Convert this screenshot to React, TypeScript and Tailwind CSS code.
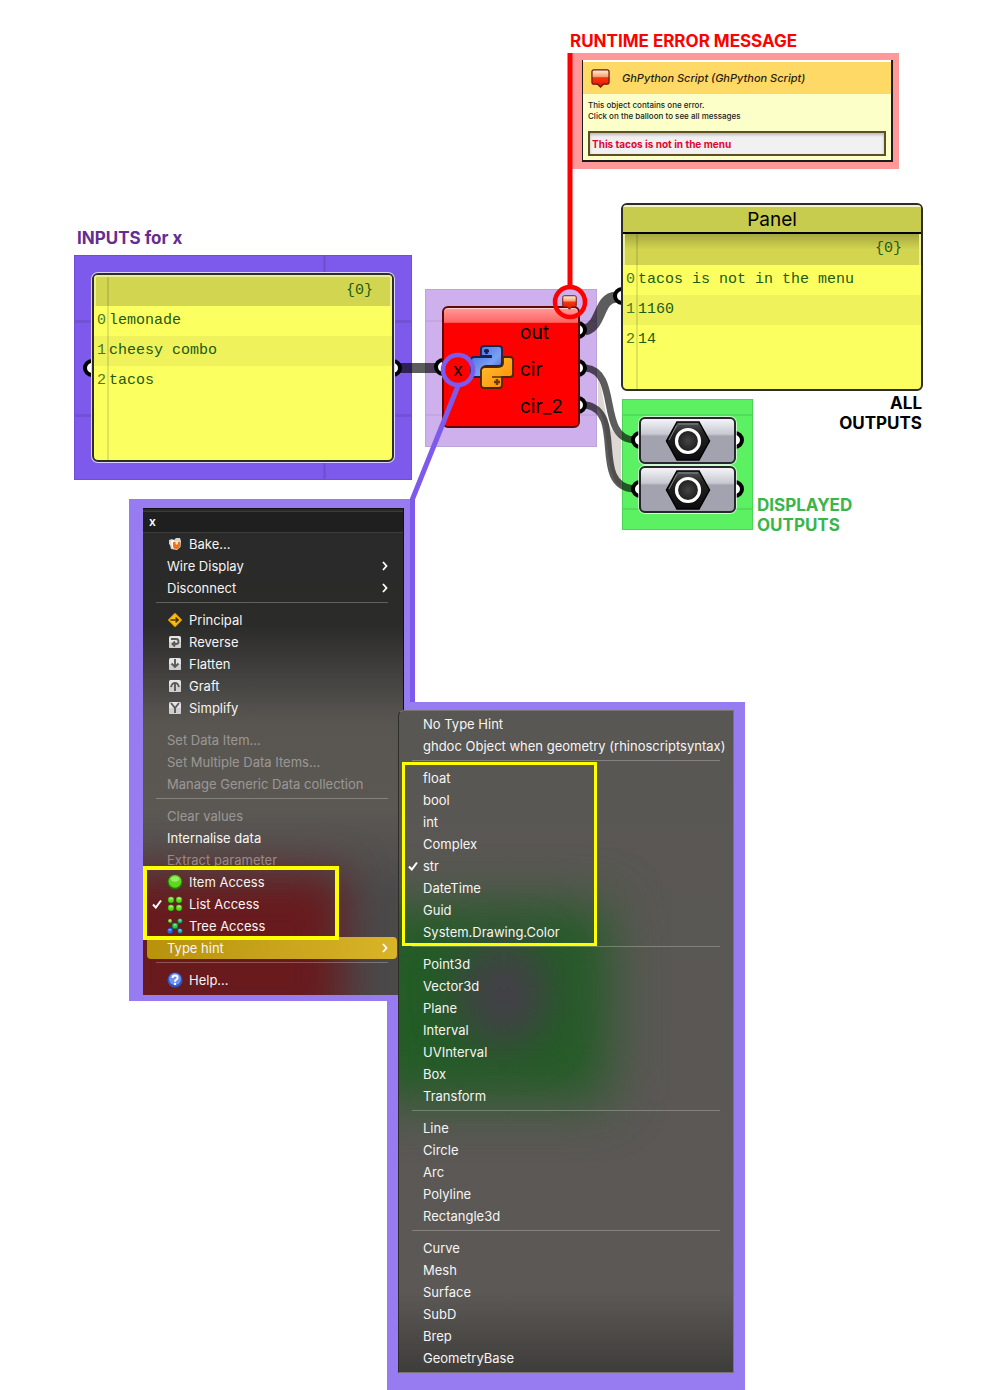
import React from "react";

type Item = {
  label: string;
  icon?: React.ReactNode;
  disabled?: boolean;
  checked?: boolean;
  submenu?: boolean;
  active?: boolean;
};

function BakeIcon() {
  return (
    <svg viewBox="0 0 14 14" className="size-[14px]" aria-hidden="true">
      <path d="M1 3 L4 2 L6 3 L8 1 L12 1 L13 4 L12.500 10 L9 13 L3 12 L2 8 L1 7Z" fill="#ddd6cf" />
      <path d="M3 4 L6 3 L6 11 L4 10Z" fill="#fff" />
      <path d="M5 5 H12 V9 Q11 12 8.500 12 Q5 12 5 9Z" fill="#f0701c" />
      <path d="M7.500 4 H10 V7 Q8.800 8.500 7.500 7Z" fill="#ffe9a8" />
    </svg>
  );
}

function PrincipalIcon() {
  return (
    <svg viewBox="0 0 14 14" className="size-[14px]" aria-hidden="true">
      <path d="M7 .8 L13.200 7 L7 13.200 L.8 7Z" fill="#fcc30d" stroke="#f0ac08" strokeWidth="1.500" strokeLinejoin="round" />
      <path d="M2.500 7 H10 M7.500 4.500 L10.200 7 L7.500 9.500" fill="none" stroke="#4b3508" strokeWidth="1.600" />
    </svg>
  );
}

function TileIcon({ children }: { children: React.ReactNode }) {
  return (
    <svg viewBox="0 0 14 14" className="size-[14px]" aria-hidden="true">
      <rect x="1" y="1" width="12" height="12" rx="1.500" fill="#e4e4e4" />
      <path d="M1 7 H13 V11.500 Q13 13 11.500 13 H2.500 Q1 13 1 11.500Z" fill="#cfcfcf" />
      <g fill="none" stroke="#5a5a5a" strokeWidth="1.900">{children}</g>
    </svg>
  );
}

function SphereIcon({ spots }: { spots: { x: number; y: number; r: number; c: string; d: string }[] }) {
  return (
    <svg viewBox="0 0 16 16" className="size-[16px]" aria-hidden="true">
      {spots.length === 5 && <path d="M3 3 L13 13 M13 3 L3 13" stroke="#2a4a8a" strokeWidth="1.500" />}
      {spots.map((s, i) => (
        <g key={i}>
          <circle cx={s.x} cy={s.y} r={s.r} fill={s.d} />
          <circle cx={s.x} cy={s.y - s.r * 0.1} r={s.r * 0.85} fill={s.c} />
          <ellipse cx={s.x} cy={s.y - s.r * 0.4} rx={s.r * 0.55} ry={s.r * 0.35} fill="#fff" opacity=".4" />
        </g>
      ))}
    </svg>
  );
}

function HelpIcon() {
  return (
    <svg viewBox="0 0 16 16" className="size-[16px]" aria-hidden="true">
      <circle cx="8" cy="8" r="7.500" fill="#2e55c8" />
      <circle cx="8" cy="7" r="6" fill="#6d93ee" />
      <path d="M5.500 6 Q5.500 3.500 8 3.500 Q10.600 3.500 10.600 5.700 Q10.600 7 9 7.800 Q8 8.400 8 9.700" fill="none" stroke="#fff" strokeWidth="1.900" />
      <circle cx="8" cy="12" r="1.200" fill="#fff" />
    </svg>
  );
}

function Balloon({ className }: { className: string }) {
  return (
    <svg viewBox="0 0 20 20" className={className} aria-hidden="true">
      <defs>
        <linearGradient id="balloon" x1="0" y1="0" x2="0" y2="1">
          <stop offset="0" stopColor="#fff3e0" />
          <stop offset=".4" stopColor="#f7a070" />
          <stop offset=".45" stopColor="#f03a12" />
          <stop offset="1" stopColor="#ee1000" />
        </linearGradient>
      </defs>
      <path d="M3 1 H17 Q19 1 19 3 V14 Q19 16 17 16 H13 L10 19 L7 16 H3 Q1 16 1 14 V3 Q1 1 3 1Z" fill="url(#balloon)" stroke="#6e1408" strokeWidth="1.300" />
    </svg>
  );
}

function PythonIcon() {
  return (
    <svg viewBox="0 0 44 44" className="size-[44px]" aria-hidden="true">
      <defs>
        <linearGradient id="pyBlue" x1="0" y1="0" x2="1" y2="1">
          <stop offset="0" stopColor="#3d66d8" />
          <stop offset=".6" stopColor="#7ba0f5" />
          <stop offset="1" stopColor="#3555b8" />
        </linearGradient>
        <linearGradient id="pyGold" x1="0" y1="0" x2="1" y2="1">
          <stop offset="0" stopColor="#ffc43a" />
          <stop offset="1" stopColor="#ff8a00" />
        </linearGradient>
      </defs>
      <path d="M14 1 H29 Q32 1 32 4 V18 Q32 21 29 21 H17 Q12 21 12 26 V32 H4 Q1 32 1 29 V15 Q1 12 4 12 H21 V11 H11 V4 Q11 1 14 1Z" fill="url(#pyBlue)" stroke="#14234f" strokeWidth="1.800" />
      <path d="M33 12 H40 Q43 12 43 15 V29 Q43 32 40 32 H32 V40 Q32 43 29 43 H14 Q11 43 11 40 V26 Q11 22 15 22 H28 Q33 22 33 18Z" fill="url(#pyGold)" stroke="#4c2500" strokeWidth="1.800" />
      <path d="M22 32 H32" stroke="#5c2d00" strokeWidth="1.500" />
      <path d="M14 6 h5 M16.500 4 v5" stroke="#13204d" strokeWidth="2.600" />
      <path d="M24 37 h6 M27 34 v6" stroke="#6b3a00" strokeWidth="2.400" />
    </svg>
  );
}

function HexIcon() {
  return (
    <svg viewBox="0 0 46 42" className="h-[42px] w-[46px]" aria-hidden="true">
      <defs>
        <linearGradient id="hex" x1="0" y1="0" x2="0" y2="1">
          <stop offset="0" stopColor="#555" />
          <stop offset=".3" stopColor="#222" />
          <stop offset="1" stopColor="#0c0c0c" />
        </linearGradient>
        <radialGradient id="hexHole">
          <stop offset="0" stopColor="#444" />
          <stop offset="1" stopColor="#1c1c1c" />
        </radialGradient>
      </defs>
      <path d="M12 2 H34 L44.500 21 L34 40 H12 L1.500 21Z" fill="url(#hex)" stroke="#000" strokeWidth="1.500" />
      <path d="M13 4 H33 M12 5 L4 20" stroke="#888" fill="none" />
      <circle cx="23" cy="21" r="11.500" fill="url(#hexHole)" stroke="#fff" strokeWidth="3.200" />
    </svg>
  );
}

const green = { c: "#5fd81a", d: "#1f7a08" };
const contextGroups: Item[][] = [
  [{ label: "Bake...", icon: <BakeIcon /> }, { label: "Wire Display", submenu: true }, { label: "Disconnect", submenu: true }],
  [
    { label: "Principal", icon: <PrincipalIcon /> },
    { label: "Reverse", icon: <TileIcon><path d="M3 4 H8 Q10.500 4 10.500 6.500 Q10.500 9 8 9 H4.500 M7 6.500 L4.500 9 L7 11.500" /></TileIcon> },
    { label: "Flatten", icon: <TileIcon><path d="M7 2 V10 M3.500 6.500 L7 10 L10.500 6.500" /></TileIcon> },
    { label: "Graft", icon: <TileIcon><path d="M7 12 V4 M3 8 Q4 4 7 4 Q10 4 11 8" /></TileIcon> },
    { label: "Simplify", icon: <TileIcon><path d="M3 2 L7 7 L11 2 M7 7 V12" /></TileIcon> },
  ],
  [
    { label: "Set Data Item...", disabled: true },
    { label: "Set Multiple Data Items...", disabled: true },
    { label: "Manage Generic Data collection", disabled: true },
  ],
  [
    { label: "Clear values", disabled: true },
    { label: "Internalise data" },
    { label: "Extract parameter", disabled: true },
    { label: "Item Access", icon: <SphereIcon spots={[{ x: 8, y: 8, r: 7.5, ...green }]} /> },
    {
      label: "List Access",
      checked: true,
      icon: <SphereIcon spots={[{ x: 4, y: 4, r: 3.3, ...green }, { x: 12, y: 4, r: 3.3, ...green }, { x: 4, y: 12, r: 3.3, ...green }, { x: 12, y: 12, r: 3.3, ...green }]} />,
    },
    {
      label: "Tree Access",
      icon: (
        <SphereIcon
          spots={[
            { x: 3, y: 3, r: 2, c: "#8ade20", d: "#3c8a10" },
            { x: 13, y: 3, r: 2.5, c: "#20c070", d: "#0b7a50" },
            { x: 3, y: 13, r: 3, c: "#2866d8", d: "#123a98" },
            { x: 13, y: 13, r: 2.5, c: "#18b0c0", d: "#0b6a88" },
            { x: 8, y: 8, r: 3, c: "#20d040", d: "#0b8030" },
          ]}
        />
      ),
    },
    { label: "Type hint", submenu: true, active: true },
  ],
  [{ label: "Help...", icon: <HelpIcon /> }],
];

const hints = (...labels: string[]): Item[] => labels.map((label) => ({ label, checked: label === "str" }));
const hintGroups: Item[][] = [
  hints("No Type Hint", "ghdoc Object when geometry (rhinoscriptsyntax)"),
  hints("float", "bool", "int", "Complex", "str", "DateTime", "Guid", "System.Drawing.Color"),
  hints("Point3d", "Vector3d", "Plane", "Interval", "UVInterval", "Box", "Transform"),
  hints("Line", "Circle", "Arc", "Polyline", "Rectangle3d"),
  hints("Curve", "Mesh", "Surface", "SubD", "Brep", "GeometryBase"),
];

function MenuRow({ item }: { item: Item }) {
  return (
    <button
      type="button"
      disabled={item.disabled}
      className={`mx-1 flex h-[22px] items-center whitespace-nowrap rounded pr-2 text-left text-[13px] leading-[22px] ${
        item.disabled ? "text-white/40" : "text-[#f6f5f4]"
      } ${item.active ? "bg-linear-to-r from-[#b8920b] to-[#d8b428]" : ""}`}
    >
      <span className="flex w-5 shrink-0 justify-center">
        {item.checked && (
          <svg viewBox="0 0 10 10" className="size-[10px]" aria-label="checked">
            <path d="M1 5.500 L3.800 8.500 L9 1.500" fill="none" stroke="#fff" strokeWidth="2" />
          </svg>
        )}
      </span>
      {item.icon && <span className="mr-1.5 flex w-4 shrink-0 justify-center">{item.icon}</span>}
      <span className="grow">{item.label}</span>
      {item.submenu && (
        <svg viewBox="0 0 6 10" className="mr-px h-[10px] w-[6px]" aria-hidden="true">
          <path d="M1 1 L4.500 5 L1 9" fill="none" stroke="#fff" strokeWidth="1.800" />
        </svg>
      )}
    </button>
  );
}

function MenuGroups({ groups, hiddenRule }: { groups: Item[][]; hiddenRule?: number }) {
  return (
    <>
      {groups.map((group, i) => (
        <React.Fragment key={i}>
          {i > 0 && (
            <div className="mx-[13px] flex h-[10px] items-start pt-[3px]">
              {i !== hiddenRule && <hr className="w-full border-t border-white/25" />}
            </div>
          )}
          <div className="flex flex-col">
            {group.map((item) => (
              <MenuRow key={item.label} item={item} />
            ))}
          </div>
        </React.Fragment>
      ))}
    </>
  );
}

function DataPanel({ title, rows }: { title?: string; rows: string[] }) {
  return (
    <section
      className={`relative z-[2] flex flex-col overflow-hidden rounded-md border-2 border-[#2c2c28] bg-[linear-gradient(to_right,transparent_13px,#0000001c_13px,#0000001c_15px,transparent_15px)] bg-[#fcff60] font-['Liberation_Mono',monospace] text-[15px] text-[#1d5a14] ${
        title ? "h-[188px]" : "h-[189px] shadow-[0_0_0_1px_#ddd4ff]"
      }`}
    >
      {title && (
        <h2 className="h-[29px] shrink-0 border-b-2 border-black bg-[#c8cc4e] text-center font-['Inter',sans-serif] text-[19px] leading-[29px] text-black shadow-[inset_0_2px_0_#f4f4c8]">
          {title}
        </h2>
      )}
      <div
        className={`flex h-[31px] shrink-0 items-center justify-end border-r-2 border-l-2 border-[#ecee9a] pr-[17px] ${
          title ? "bg-linear-to-b from-[#00000058] to-[#0000002a] to-50%" : "border-t-2 bg-[#0000002a]"
        }`}
      >
        {"{0}"}
      </div>
      <ol className="flex flex-col">
        {rows.map((row, i) => (
          <li key={row} className={`flex h-[30px] items-center ${i % 2 ? "bg-black/5" : ""}`}>
            <span className="w-[15px] pl-[3px] text-[#4a7a20]">{i}</span>
            <span>{row}</span>
          </li>
        ))}
      </ol>
    </section>
  );
}

function GeometryNode() {
  return (
    <div className="relative z-[2] flex h-[47px] items-center justify-center rounded-md border-2 border-[#26262c] bg-linear-to-b from-[#f4f4f8] from-0% via-[#c8c8d2] via-35% to-[#a3a3b0] to-40% shadow-[0_0_0_1px_#ffffffb0]">
      <HexIcon />
    </div>
  );
}

const grips = [
  [92, 368], [393, 368], [443, 367], [578, 330], [578, 368], [578, 405],
  [622, 296], [640, 440], [735, 440], [640, 489], [735, 489],
];

export default function App() {
  return (
    <main className="relative min-h-[1390px] overflow-hidden bg-white font-['Inter',sans-serif]">
      {/* Input node */}
      <section className="absolute top-[228px] left-[74px] flex w-[338px] flex-col gap-[7px]">
        <h1 className="pl-[3px] text-[17px] font-bold leading-5 text-[#662d91]">INPUTS for x</h1>
        <div className="border border-[#6f4ed8] bg-[#7e5aec] bg-[linear-gradient(to_right,transparent_248px,#0000001a_248px,#0000001a_251px,transparent_251px),linear-gradient(to_bottom,transparent_64px,#0000001a_64px,#0000001a_67px,transparent_67px,transparent_158px,#0000001a_158px,#0000001a_161px,transparent_161px)] px-[17px] py-[17px]">
          <DataPanel rows={["lemonade", "cheesy combo", "tacos"]} />
        </div>
      </section>

      {/* Script node */}
      <section className="absolute top-[289px] left-[425px] w-[172px] border border-[#bca4d8] bg-[#cdb0ec] bg-[linear-gradient(to_bottom,transparent_30px,#0000000d_30px,#0000000d_32px,transparent_32px,transparent_124px,#0000000d_124px,#0000000d_126px,transparent_126px)] pt-4 pr-4 pb-[18px] pl-4">
        <div className="relative z-[2] flex h-[122px] items-center rounded-md border-2 border-[#5e0808] bg-linear-to-b from-[#ff9a9a] from-0% via-[#ff6464] via-12% to-[#ff0000] to-13% pl-[26px] text-[19px] text-black shadow-[inset_0_1px_0_#ffd0d0]">
          <PythonIcon />
          <ul className="ml-1.5 flex flex-col pt-1 leading-[37px]">
            <li>out</li>
            <li>cir</li>
            <li>cir_2</li>
          </ul>
        </div>
      </section>

      {/* Output nodes */}
      <section className="absolute top-[203px] left-[621px] flex w-[302px] flex-col">
        <DataPanel title="Panel" rows={["tacos is not in the menu", "1160", "14"]} />
        <div className="flex items-start pt-[2px] pl-px text-[17px] font-bold leading-5">
          <div className="mt-1.5 flex h-[131px] w-[131px] shrink-0 flex-col gap-[2px] border border-[#4bd455] bg-[#5bf163] bg-[linear-gradient(to_bottom,transparent_14px,#00000015_14px,#00000015_16px,transparent_16px,transparent_108px,#00000015_108px,#00000015_110px,transparent_110px)] px-4 pt-[17px]">
            <GeometryNode />
            <GeometryNode />
          </div>
          <div className="flex grow flex-col gap-[62px] pl-1">
            <h1 className="pr-px text-right text-black">
              ALL
              <br />
              OUTPUTS
            </h1>
            <h1 className="text-[#39b54a]">
              DISPLAYED
              <br />
              OUTPUTS
            </h1>
          </div>
        </div>
      </section>

      {/* Wires and grips */}
      <svg className="absolute top-0 left-0 z-[1] h-[560px] w-[1000px]" viewBox="0 0 1000 560" aria-hidden="true">
        <path d="M598 376 C606 400 604 432 621 437 V487 C604 478 610 420 598 409Z" fill="#ddd8d3" />
        <g fill="none" stroke="#000" strokeOpacity=".64">
          <path d="M400 368 H436" strokeWidth="10" />
          <path d="M585 330 C602 326 598 298 616 297" strokeWidth="11" />
          <path d="M586 368 C620 372 598 438 634 440" strokeWidth="7" />
          <path d="M586 405 C626 412 590 486 634 489" strokeWidth="7" />
        </g>
        {grips.map(([x, y], i) => (
          <circle key={i} cx={x} cy={y} r="7" fill="#fff" stroke="#000" strokeWidth="4" />
        ))}
      </svg>

      {/* Error balloon */}
      <section className="absolute top-[31px] left-[570px] flex w-[329px] flex-col gap-[2px]">
        <h1 className="text-[17px] font-bold leading-5 text-[#ff0000]">RUNTIME ERROR MESSAGE</h1>
        <div className="bg-[#ff9999] py-[7px] pr-[6px] pl-[12px]">
          <div className="border-r-2 border-b-2 border-l border-[#1c1c1c] bg-[#fdffc8] pb-1">
            <div className="flex h-[34px] items-center gap-3 border-t-2 border-white bg-[#ffd966] pl-2">
              <Balloon className="size-[19px]" />
              <h2 className="text-[11px] font-medium italic text-[#2a2210]">GhPython Script (GhPython Script)</h2>
            </div>
            <p className="px-[5px] pt-1.5 text-[8px] font-medium leading-[11px] text-[#222]">
              This object contains one error.
              <br />
              Click on the balloon to see all messages
            </p>
            <p className="mx-[5px] mt-[9px] h-[25px] border-2 border-[#5f5023] bg-[#f1f1f1] pl-0.5 text-[10px] font-bold leading-[23px] text-[#e2052f] shadow-[inset_0_2px_3px_#bbb]">
              This tacos is not in the menu
            </p>
          </div>
        </div>
      </section>

      {/* Type hint submenu */}
      <div className="absolute top-[702px] left-[387px] w-[358px] bg-[#977bf0] pt-2 pr-[11px] pb-[18px] pl-[11px]">
        <nav
          aria-label="Type hint"
          className="relative z-20 isolate overflow-hidden rounded-tl-md border border-[#777572] border-l-[#2e2c2b] bg-[linear-gradient(to_bottom,#595753_0%,#5b5855_88%,#3f3d3b_100%)] pt-[2px] pb-[3px]"
        >
          <div className="absolute top-[195px] -left-10 -z-10 h-[195px] w-[250px] bg-[#235c26] blur-[26px]" />
          <div className="absolute top-[230px] left-[60px] -z-10 h-[105px] w-[90px] rounded-full bg-[#434047] blur-[22px]" />
          <MenuGroups groups={hintGroups} />
        </nav>
      </div>

      {/* Context menu */}
      <div className="absolute top-[499px] left-[129px] z-10 w-[282px] bg-[#977bf0] pt-[9px] pr-[7px] pb-[6px] pl-[14px]">
        <nav
          aria-label="x"
          className="relative isolate overflow-hidden border-t border-r border-[#111] bg-[linear-gradient(to_bottom,#292929_0%,#2b2b2a_24%,#595652_44%,#5b5753_62%,#4b494a_80%)] pb-1"
        >
          <div className="absolute top-[365px] -bottom-10 -left-10 -z-10 w-[240px] bg-[#681a1d] blur-[22px]" />
          <h2 className="mt-[2px] h-[22px] border-y border-[#3c3c3c] bg-[#1f1f1f] pl-[6px] text-[12px] font-semibold leading-[20px] text-white">x</h2>
          <div className="pr-[2px]">
            <MenuGroups groups={contextGroups} hiddenRule={2} />
          </div>
        </nav>
      </div>

      {/* Annotations */}
      <div className="absolute top-[866px] left-[143px] z-30 h-[74px] w-[196px] border-4 border-[#ffff00]" />
      <div className="absolute top-[762px] left-[402px] z-30 h-[184px] w-[195px] border-[3px] border-[#ffff00]" />
      <svg className="absolute top-0 left-0 z-10 h-[702px] w-[1000px]" viewBox="0 0 1000 702" fill="none" aria-hidden="true">
        <path d="M458 386 L412.500 499 V702" stroke="#7e5aec" strokeWidth="5" />
        <circle cx="458" cy="370" r="15" stroke="#7e5aec" strokeWidth="4.500" />
        <path d="M570 53 V287" stroke="#ff0000" strokeWidth="5" />
        <circle cx="570" cy="302" r="15" stroke="#ff0000" strokeWidth="4.500" />
      </svg>
      <Balloon className="absolute top-[295px] left-[562px] z-10 size-[15px]" />
      <span className="absolute top-[359px] left-[453px] z-10 text-[18px] leading-[22px] text-black">x</span>
    </main>
  );
}
